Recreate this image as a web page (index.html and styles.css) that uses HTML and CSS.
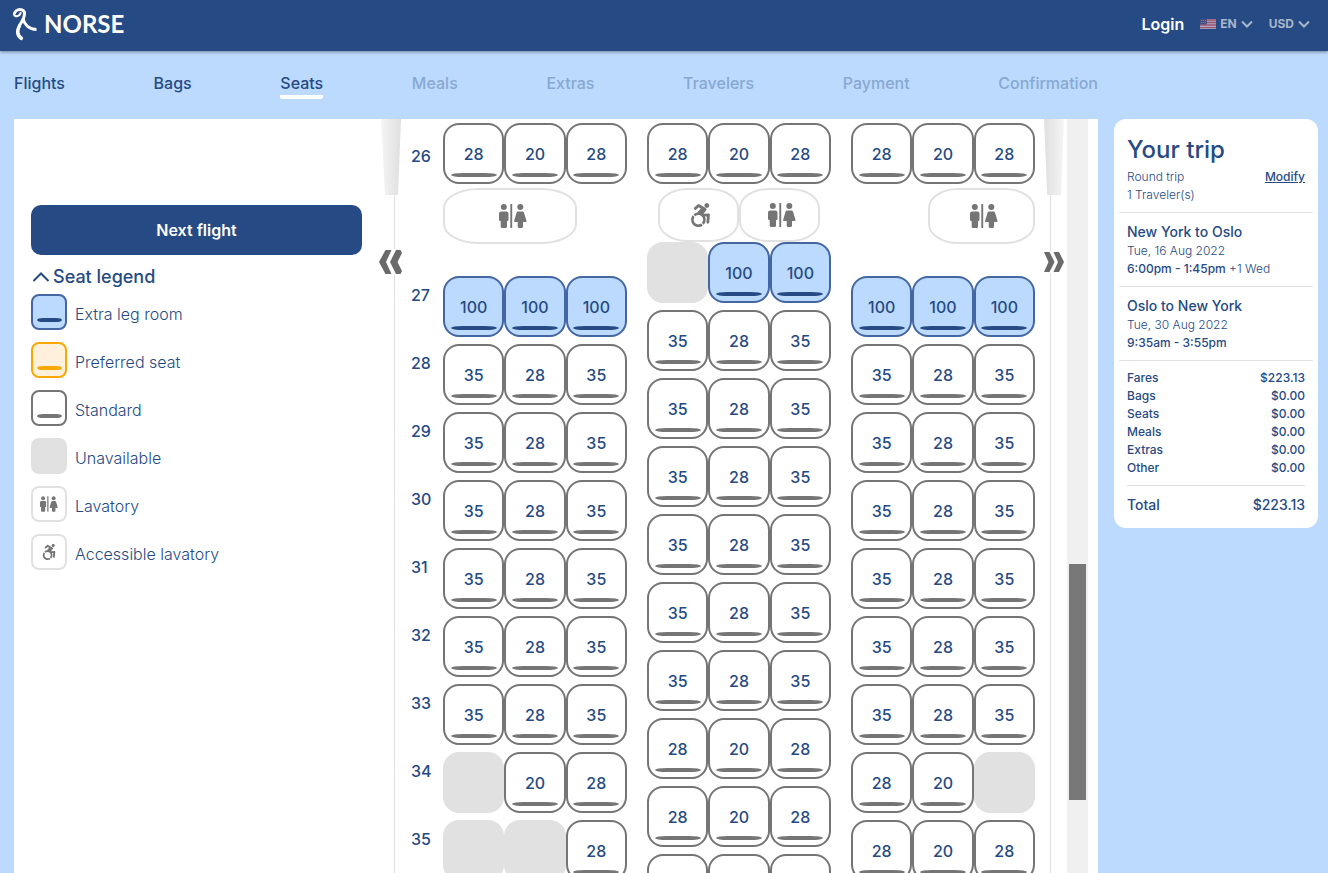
FILE: index.html
```
<!DOCTYPE html>
<html lang="en">
<head>
<meta charset="utf-8">
<title>Norse – Select seats</title>
<link rel="stylesheet" href="styles.css">
</head>
<body>
<svg class="defs" aria-hidden="true">
  <symbol id="restroom" viewBox="0 0 28 24">
    <circle cx="4.8" cy="3" r="3"/>
    <path d="M2.4 7.500h4.900c1.300 0 2.200.9 2.200 2.200v6c0 .8-.6 1.300-1.500 1.400v5.700c0 .7-.5 1.200-1.200 1.200H3c-.8 0-1.300-.5-1.300-1.200V17.100C.7 17 0 16.500 0 15.700v-6c0-1.300 1-2.200 2.400-2.200z"/>
    <rect x="11.300" y="0" width="1.900" height="24" rx=".6"/>
    <circle cx="21.300" cy="3" r="3"/>
    <path d="M19.500 7.500h3.700c1 0 1.600.5 1.900 1.400l2.300 7.500c.3 1-.2 1.700-1.200 1.700H24v4.700c0 .7-.5 1.200-1.200 1.200h-2.900c-.7 0-1.200-.5-1.200-1.200v-4.700h-2.300c-1 0-1.500-.7-1.200-1.700l2.300-7.500c.3-.9 1-1.400 2-1.400z"/>
  </symbol>
  <symbol id="wheelchair" viewBox="0 0 448 512">
    <path d="M423.9 255.8L411 413.1c-3.3 40.7-63.900 35.100-60.600-4.900l10-122.500-41.100 2.300c10.100 20.700 15.800 43.900 15.800 68.500 0 41.200-16.100 78.700-42.300 106.500l-39.300-39.300c57.900-63.700 13.100-167.200-74-167.200-25.900 0-49.500 9.900-67.200 26L73 243.200c22-20.700 50.100-35.100 81.400-40.200l75.300-85.700-42.600-24.800-51.600 46c-30 26.800-70.600-18.500-40.500-45.400l68-60.700c9.800-8.800 24.100-10.200 35.500-3.600 0 0 139.300 80.900 139.500 81.100 16.200 10.100 20.700 36 6.100 52.600L285.700 229l106.100-5.900c18.500-1.100 33.600 14.400 32.100 32.700zm-64.900-154c28.100 0 50.900-22.800 50.900-50.900C409.900 22.800 387.100 0 359 0c-28.100 0-50.900 22.800-50.900 50.900 0 28.100 22.800 50.900 50.900 50.900zM179.600 456.500c-80.600 0-127.400-90.600-82.700-156.100l-39.700-39.700C36.400 287 24 320.300 24 356.400c0 130.700 150.700 201.400 251.400 122.500l-39.700-39.700c-16 10.900-35.300 17.300-56.100 17.300z"/>
  </symbol>
  <symbol id="chevron" viewBox="0 0 12 8">
    <path d="M1 1.500l5 5 5-5" fill="none" stroke="currentColor" stroke-width="2"/>
  </symbol>
</svg>

<header class="topbar">
  <a class="brand" href="#">
    <svg class="brand-mark" viewBox="0 0 26 34" aria-hidden="true">
      <path d="M2.300 7.500C2.500 4.500 5.200 2.400 8 2.400c2.800 0 4.700 1.800 4.500 4.600-.3 4.500-2.500 7.300-5 11.500-3.200 5.500-3 11 3.200 13.700" fill="none" stroke="currentColor" stroke-width="3"/>
      <path d="M8 18c-3 5-2.500 10.500 2 13.500" fill="none" stroke="currentColor" stroke-width="3"/>
      <path d="M1.900 7.200c.3 2.400 3 2.600 4.700 1.500 1.300-.8 2-2 2.300-3.500" fill="none" stroke="currentColor" stroke-width="2"/>
      <path d="M11 11.500c1.300 6 5.800 10.800 13.500 11" fill="none" stroke="currentColor" stroke-width="3"/>
    </svg>
    <span>NORSE</span>
  </a>
  <div class="account">
    <a class="login" href="#">Login</a>
    <button class="picker" type="button">
      <svg class="flag" viewBox="0 0 16 10" aria-hidden="true">
        <rect width="16" height="10" fill="#a9abc4"/>
        <path d="M0 1h16M0 3.500h16M0 6h16M0 8.700h16" stroke="#a2526f" stroke-width="1.300"/>
        <rect width="7" height="5.500" fill="#4a4f80"/>
        <path d="M1 1.500h5M1 3.500h5" stroke="#8589ac" stroke-width=".7" stroke-dasharray="1 1"/>
      </svg>
      EN
      <svg class="caret" aria-hidden="true"><use href="#chevron"/></svg>
    </button>
    <button class="picker" type="button">
      USD
      <svg class="caret" aria-hidden="true"><use href="#chevron"/></svg>
    </button>
  </div>
</header>

<div class="page">
  <div class="booking">
    <nav class="steps">
      <a href="#">Flights</a>
      <a href="#">Bags</a>
      <a class="current" href="#" aria-current="step">Seats</a>
      <a class="todo" href="#">Meals</a>
      <a class="todo" href="#">Extras</a>
      <a class="todo" href="#">Travelers</a>
      <a class="todo" href="#">Payment</a>
      <a class="todo" href="#">Confirmation</a>
    </nav>

    <main class="panel">
      <section class="controls">
        <button class="next" type="button">Next flight</button>
        <button class="legend-toggle" type="button" aria-expanded="true">
          <svg viewBox="0 0 18 12" aria-hidden="true"><path d="M1.500 10L9 2.500l7.500 7.500" fill="none" stroke="currentColor" stroke-width="2"/></svg>
          Seat legend
        </button>
        <ul class="legend">
          <li><span class="swatch extra"></span>Extra leg room</li>
          <li><span class="swatch preferred"></span>Preferred seat</li>
          <li><span class="swatch standard"></span>Standard</li>
          <li><span class="swatch unavailable"></span>Unavailable</li>
          <li><span class="swatch facility"><svg class="icon-restroom"><use href="#restroom"/></svg></span>Lavatory</li>
          <li><span class="swatch facility"><svg class="icon-wheelchair"><use href="#wheelchair"/></svg></span>Accessible lavatory</li>
        </ul>
      </section>

      <section class="cabin" aria-label="Seat map">
        <span class="wing wing-left"></span>
        <span class="wing wing-right"></span>
        <svg class="exit exit-left" viewBox="0 0 24 26" aria-label="Exit"><path d="M6.500 1h6L7 13l5.500 12h-6L0 13zM17 1h4.500l1.500 3-4.500 9 4.500 9-1.500 3H17l-6-12z"/></svg>
        <svg class="exit exit-right" viewBox="0 0 22 22" aria-label="Exit"><path d="M1 1h5.500l5 10-5 10H1l4.500-10zM10.500 1h5.500l5 10-5 10h-5.500L15 11z"/></svg>
        <div class="row-numbers" id="row-numbers"></div>
        <div class="block" id="block-left">
          <div class="lavs"><span class="lav wide"><svg class="icon-restroom"><use href="#restroom"/></svg></span></div>
        </div>
        <div class="block" id="block-middle">
          <div class="lavs center">
            <span class="lav"><svg class="icon-wheelchair"><use href="#wheelchair"/></svg></span>
            <span class="lav"><svg class="icon-restroom"><use href="#restroom"/></svg></span>
          </div>
        </div>
        <div class="block" id="block-right">
          <div class="lavs end"><span class="lav medium"><svg class="icon-restroom"><use href="#restroom"/></svg></span></div>
        </div>
      </section>

      <div class="scrollbar" aria-hidden="true"><span class="thumb"></span></div>
    </main>
  </div>

  <aside class="trip">
    <header class="trip-head">
      <h1>Your trip</h1>
      <p class="between"><span>Round trip</span><a href="#">Modify</a></p>
      <p>1 Traveler(s)</p>
    </header>
    <section class="leg">
      <h2>New York to Oslo</h2>
      <p>Tue, 16 Aug 2022</p>
      <p><b>6:00pm - 1:45pm</b> +1 Wed</p>
    </section>
    <section class="leg">
      <h2>Oslo to New York</h2>
      <p>Tue, 30 Aug 2022</p>
      <p><b>9:35am - 3:55pm</b></p>
    </section>
    <table class="costs">
      <tbody>
        <tr><th scope="row">Fares</th><td>$223.13</td></tr>
        <tr><th scope="row">Bags</th><td>$0.00</td></tr>
        <tr><th scope="row">Seats</th><td>$0.00</td></tr>
        <tr><th scope="row">Meals</th><td>$0.00</td></tr>
        <tr><th scope="row">Extras</th><td>$0.00</td></tr>
        <tr><th scope="row">Other</th><td>$0.00</td></tr>
      </tbody>
    </table>
    <p class="total between"><span>Total</span><span>$223.13</span></p>
  </aside>
</div>
<script src="seats.js"></script>
</body>
</html>
```
FILE: styles.css
```
:root {
  --navy: #264a83;
  --sky: #bbdafe;
  --grey: #757575;
  --line: #e1e1e1;
}

* { box-sizing: border-box; }

body {
  margin: 0;
  height: 100vh;
  display: flex;
  flex-direction: column;
  overflow: hidden;
  background: var(--sky);
  color: var(--navy);
  font-family: Inter, "Liberation Sans", sans-serif;
  font-size: 16px;
}

button { font: inherit; color: inherit; border: 0; background: none; padding: 0; cursor: pointer; }
a { color: inherit; text-decoration: none; }
h1, h2, p, ul { margin: 0; padding: 0; }
.defs { position: absolute; width: 0; height: 0; }

/* Top bar */
.topbar {
  flex: none;
  height: 51px;
  padding: 0 18px 4px 12px;
  display: flex;
  align-items: center;
  justify-content: space-between;
  background: var(--navy);
  color: #fff;
  box-shadow: 0 1px 3px rgba(0, 0, 0, 0.4);
}
.brand { display: flex; align-items: center; gap: 6px; font: 700 24px/32px Lato, sans-serif; }
.brand-mark { width: 26px; height: 34px; }
.account { display: flex; align-items: center; gap: 16px; }
.login { font-weight: 600; }
.picker { display: flex; align-items: center; gap: 4px; font-size: 12px; font-weight: 700; color: #a8b7cd; }
.flag { width: 16px; height: 10px; }
.caret { width: 12px; height: 8px; }

/* Page */
.page { flex: 1; min-height: 0; display: flex; align-items: flex-start; gap: 16px; padding: 0 10px 0 14px; }
.booking { flex: 1; height: 100%; display: flex; flex-direction: column; }
.steps { flex: none; height: 68px; padding-top: 20px; display: flex; align-items: flex-start; justify-content: space-between; font-weight: 500; line-height: 24px; }
.steps .current { border-bottom: 4px solid #fff; border-radius: 2px; }
.steps .todo { color: #88a8d2; }

.panel { flex: 1; min-height: 0; display: flex; padding-right: 10px; background: #fff; overflow: hidden; }

/* Legend */
.controls { flex: none; width: 380px; padding: 86px 32px 0 17px; }
.next { width: 100%; height: 50px; border-radius: 10px; background: var(--navy); color: #fff; font-weight: 600; }
.legend-toggle { display: flex; align-items: center; gap: 3px; margin: 10px 0 5px 1px; font-size: 18px; font-weight: 500; line-height: 24px; }
.legend-toggle svg { width: 18px; height: 12px; }
.legend { list-style: none; display: grid; gap: 12px; font-weight: 300; }
.legend li { display: flex; align-items: flex-start; gap: 8px; height: 36px; line-height: 40px; }

.swatch {
  width: 36px;
  height: 36px;
  display: flex;
  justify-content: center;
  border: 2px solid var(--grey);
  border-radius: 8px;
}
.swatch.facility { align-items: center; border-color: var(--line); }
.swatch .icon-restroom { width: 18px; height: 16px; }
.swatch .icon-wheelchair { width: 14px; height: 16px; }
.swatch::after,
.seat::after {
  content: "";
  align-self: flex-end;
  width: 25px;
  height: 4px;
  margin-bottom: 6px;
  border-radius: 6px / 2px;
  background: var(--grey);
}
.swatch.facility::after, .swatch.unavailable::after { content: none; }
.extra { background: var(--sky); border-color: #4466a3; }
.swatch.extra::after, .seat.extra::after { background: var(--navy); }
.preferred { background: #fff0db; border-color: #f9a800; }
.swatch.preferred::after { background: #f9a800; }
.unavailable { background: var(--line); border-color: var(--line); }

/* Cabin */
.cabin {
  position: relative;
  flex: 1;
  display: grid;
  grid-template-columns: 12px repeat(3, 1fr);
  column-gap: 20px;
  align-items: start;
  padding: 4px 15px 0 16px;
  border: solid var(--line);
  border-width: 0 1px;
}
.row-numbers { font-weight: 500; line-height: 20px; display: grid; gap: 48px; padding-top: 23px; }
.row-numbers span:first-child { margin-bottom: 71px; }
.trio { display: grid; grid-template-columns: repeat(3, 1fr); margin-bottom: 7px; }
.lavs { display: flex; height: 56px; margin: -3px 0 32px; }
.lavs.center { justify-content: center; height: 54px; margin-bottom: 0; }
.lavs.end { justify-content: flex-end; }
.lav {
  width: 81px;
  display: flex;
  align-items: center;
  justify-content: center;
  border: 2px solid var(--line);
  border-radius: 30px / 20px;
}
.lav.wide { width: 134px; border-radius: 36px / 20px; }
.lav.medium { width: 107px; }
.lav .icon-restroom { width: 28px; height: 24px; margin-left: 5px; }
.lav .icon-wheelchair { width: 21px; height: 24px; margin-left: 3px; }
.icon-restroom, .icon-wheelchair { fill: var(--grey); }

.seat {
  height: 61px;
  display: grid;
  justify-items: center;
  grid-template-rows: 1fr auto;
  border: 2px solid var(--grey);
  border-radius: 16px;
  background: #fff;
  font-weight: 500;
  line-height: 20px;
}
.seat span { padding-top: 19px; }
.seat::after { width: 46px; margin-bottom: 5px; border-radius: 12px / 2px; }
.seat.extra { background: var(--sky); border-color: #4466a3; }
.seat.unavailable { background: var(--line); border-color: var(--line); }
.seat.unavailable::after { background: none; }

.wing { position: absolute; top: 0; width: 20px; height: 76px; background: linear-gradient(to right, #f5f5f5, #dfdfdf); }
.wing-left { left: -14px; clip-path: polygon(0 0, 100% 0, 85% 100%, 20% 100%); }
.wing-right { right: -14px; background: linear-gradient(to right, #dfdfdf, #f5f5f5); clip-path: polygon(0 0, 100% 0, 85% 100%, 16% 100%); }
.exit { position: absolute; fill: #6a6a6a; background: #fff; }
.exit-left { left: -16px; top: 130px; width: 24px; height: 26px; }
.exit-right { right: -15px; top: 132px; width: 22px; height: 22px; }

.scrollbar { flex: none; width: 21px; margin-left: 16px; padding: 445px 2px 0; background: #f0f0f0; }
.thumb { display: block; height: 236px; background: #787878; }

/* Trip summary */
.trip {
  flex: none;
  width: 204px;
  margin-top: 68px;
  padding: 13px 5px 14px;
  border-radius: 12px;
  background: #fff;
  font-size: 12px;
  font-weight: 300;
  line-height: 18px;
}
.trip-head, .leg { padding: 0 8px 8px; border-bottom: 1px solid #dcdfe3; }
.trip h1 { font-size: 24px; font-weight: 500; line-height: 36px; }
.trip h2 { font-size: 14px; font-weight: 500; line-height: 20px; }
.trip b { font-weight: 500; }
.trip a { font-weight: 500; text-decoration: underline; }
.between { display: flex; justify-content: space-between; }
.leg { padding-top: 9px; }
.costs { width: 178px; margin: 8px 8px 0; border-collapse: collapse; font-weight: 500; }
.costs th, .costs td { padding: 0; font-weight: 500; text-align: left; }
.costs td { text-align: right; }
.total { margin: 8px 8px 0; padding-top: 10px; border-top: 1px solid #dcdfe3; font-size: 14px; font-weight: 500; }
```
FILE: seats.js
```
// Seat prices per row; "x" marks an unavailable seat, null a seat without a price.
const cabin = {
  "block-left": [
    [28, 20, 28], [100, 100, 100],
    [35, 28, 35], [35, 28, 35], [35, 28, 35], [35, 28, 35], [35, 28, 35], [35, 28, 35],
    ["x", 20, 28], ["x", "x", 28]
  ],
  "block-middle": [
    [28, 20, 28], ["x", 100, 100],
    [35, 28, 35], [35, 28, 35], [35, 28, 35], [35, 28, 35], [35, 28, 35], [35, 28, 35],
    [28, 20, 28], [28, 20, 28], [null, null, null]
  ],
  "block-right": [
    [28, 20, 28], [100, 100, 100],
    [35, 28, 35], [35, 28, 35], [35, 28, 35], [35, 28, 35], [35, 28, 35], [35, 28, 35],
    [28, 20, "x"], [28, 20, 28]
  ]
};

function seat(price) {
  const button = document.createElement("button");
  button.type = "button";
  button.className = "seat";
  if (price === "x") {
    button.classList.add("unavailable");
    button.disabled = true;
    return button;
  }
  if (price === 100) button.classList.add("extra");
  const label = document.createElement("span");
  label.textContent = price ?? "";
  button.append(label);
  return button;
}

for (const [id, rows] of Object.entries(cabin)) {
  const block = document.getElementById(id);
  rows.forEach((prices, index) => {
    const trio = document.createElement("div");
    trio.className = "trio";
    trio.append(...prices.map(seat));
    if (index === 0) block.prepend(trio);
    else block.append(trio);
  });
}

const numbers = document.getElementById("row-numbers");
for (let row = 26; row <= 35; row++) {
  const span = document.createElement("span");
  span.textContent = row;
  numbers.append(span);
}
```
